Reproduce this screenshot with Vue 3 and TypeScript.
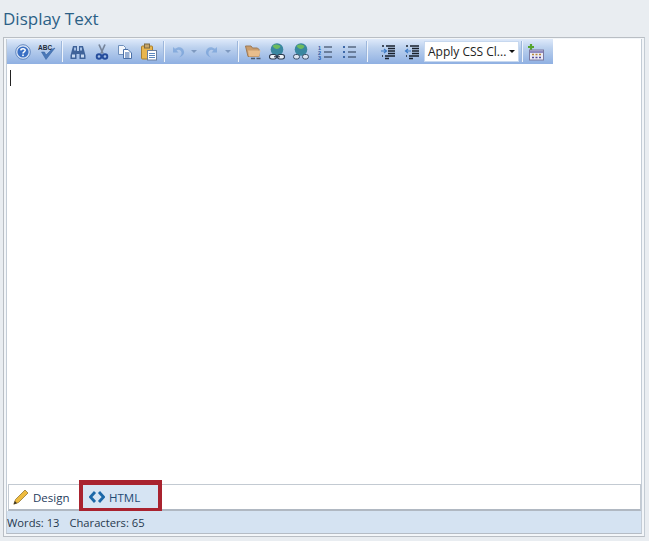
<script setup lang="ts">
const words = 13
const characters = 65
</script>

<template>
  <div class="page">
    <h1 class="title">Display Text</h1>
    <div class="editor">
      <div class="inner">
        <div class="toolbar">
          <span class="btn"><svg viewBox="0 0 16 16" class="ic"><circle cx="8" cy="8" r="7.300" fill="#dbe6f6" stroke="#4a74b4" stroke-width=".8"/><circle cx="8" cy="8" r="5.600" fill="#3a6fc4"/><path d="M5.800 6.400C5.900 4.400 10.200 4.200 10.200 6.300 10.200 7.800 8 7.800 8 9.400" fill="none" stroke="#fff" stroke-width="1.500"/><rect x="7.200" y="10.500" width="1.600" height="1.600" fill="#fff"/></svg></span>
          <span class="btn n"><svg viewBox="0 0 18 18" class="ic wide"><text x="0" y="7" class="abc">ABC</text><path d="M3.500 9 8 16.500 17 5 13.500 6.500 8 12 6.500 9Z" fill="#4a78b8" stroke="#2f5c9c" stroke-width=".5"/></svg></span>
          <i class="sep s1"></i>
          <span class="btn"><svg viewBox="0 0 16 16" class="ic"><path d="M3 2H7V7H9V2H13L15.500 11.500V15H9.500V10H6.500V15H.5V11.500Z" fill="#3f639a"/><path d="M2 10.500H5V13.500H2ZM11 10.500H14V13.500H11Z" fill="#c8daf2"/><path d="M4 3.500H6V6.500H4ZM10 3.500H12V6.500H10Z" fill="#a5c0e6"/></svg></span>
          <span class="btn n"><svg viewBox="0 0 16 16" class="ic"><path d="M5 .5 9 9.500M11 .5 7 9.500" stroke="#77859b" stroke-width="1.700" fill="none"/><circle cx="5" cy="12.500" r="2.300" fill="none" stroke="#244c9c" stroke-width="1.900"/><circle cx="11" cy="12.500" r="2.300" fill="none" stroke="#244c9c" stroke-width="1.900"/></svg></span>
          <span class="btn"><svg viewBox="0 0 16 16" class="ic"><path d="M1.500 1.500H6.500L8.500 3.500V10.500H1.500Z" fill="#f3f6fb" stroke="#6f8fbb"/><path d="M6.500 5.500H11L14.500 9V14.500H6.500Z" fill="#fff" stroke="#4a70a8"/><path d="M8 9H12.500M8 11H12.500M8 13H12.500" stroke="#2d5da6"/></svg></span>
          <span class="btn"><svg viewBox="0 0 18 18" class="ic wide"><rect x="1.500" y="3" width="11" height="13" rx="1" fill="#e9b64f" stroke="#a9802f"/><rect x="4.500" y="1" width="5" height="4" fill="#c7a569" stroke="#7b6a45"/><rect x="7.500" y="7.500" width="9" height="9.500" fill="#fff" stroke="#6a7f9e"/><path d="M9 10.500H15M9 12.500H15M9 14.500H15" stroke="#5b87bd"/></svg></span>
          <i class="sep s2"></i>
          <span class="btn s-undo"><svg viewBox="0 0 16 16" class="ic faded"><path d="M3 3V8.500H8.500L6.500 6.500C8.500 5 11 6 11.500 8.500 11.800 10.500 11 12 9 13.500 12.500 12.500 14.500 10 14 7.500 13.500 3.500 9 1.500 5 4.800Z" fill="#5c8fd0"/></svg></span>
          <span class="caret c1"></span>
          <span class="btn s-redo"><svg viewBox="0 0 16 16" class="ic faded flip"><path d="M3 3V8.500H8.500L6.500 6.500C8.500 5 11 6 11.500 8.500 11.800 10.500 11 12 9 13.500 12.500 12.500 14.500 10 14 7.500 13.500 3.500 9 1.500 5 4.800Z" fill="#5c8fd0"/></svg></span>
          <span class="caret c2"></span>
          <i class="sep s3"></i>
          <span class="btn"><svg viewBox="0 0 18 18" class="ic wide"><path d="M1.500 3H7L8.500 5H13.500L15 6.500V13.500H4Z" fill="#c99c6c" stroke="#9c7a58"/><path d="M4 7.500H16.500L15 13.500H5Z" fill="#e8bd8c"/><path d="M7 15.500H11M12.500 15.500H16.500" stroke="#4a5a70" stroke-width="1.400"/></svg></span>
          <span class="btn"><svg viewBox="0 0 18 18" class="ic wide"><circle cx="9" cy="6.500" r="6.300" fill="#3a87a0"/><path d="M4.500 3C7 .8 11 1.200 12.500 3.500 11 6.500 7 7 4.500 3Z" fill="#6dbb5e"/><rect x="1.500" y="11.500" width="7" height="4.500" rx="2.200" fill="#eef3f9" stroke="#2c3a4e" stroke-width="1.100"/><rect x="9.500" y="11.500" width="7" height="4.500" rx="2.200" fill="#eef3f9" stroke="#2c3a4e" stroke-width="1.100"/><path d="M6 13.750H12" stroke="#2c3a4e" stroke-width="1.100"/></svg></span>
          <span class="btn"><svg viewBox="0 0 18 18" class="ic wide"><circle cx="9" cy="6.500" r="6.300" fill="#3a87a0"/><path d="M4.500 3C7 .8 11 1.200 12.500 3.500 11 6.500 7 7 4.500 3Z" fill="#6dbb5e"/><rect x="1.500" y="11.500" width="6" height="4.500" rx="2.200" fill="#dbe5f2" stroke="#3a4d66" stroke-width="1"/><rect x="10.500" y="11.500" width="6" height="4.500" rx="2.200" fill="#dbe5f2" stroke="#3a4d66" stroke-width="1"/></svg></span>
          <span class="btn"><svg viewBox="0 0 16 16" class="ic"><path d="M7 3H15M7 8H15M7 13H15" stroke="#24344c" stroke-width="1.200"/><text x="1" y="5.500" class="num">1</text><text x="1" y="10.500" class="num">2</text><text x="1" y="15.500" class="num">3</text></svg></span>
          <span class="btn"><svg viewBox="0 0 16 16" class="ic"><path d="M7 3H15M7 8H15M7 13H15" stroke="#24344c" stroke-width="1.200"/><path d="M2 2H4V4H2ZM2 7H4V9H2ZM2 12H4V14H2Z" fill="#3d68a8"/></svg></span>
          <i class="sep s4"></i>
          <span class="btn s-ind"><svg viewBox="0 0 16 16" class="ic"><path d="M6 2H15M8 4.500H15M8 7H15M8 9.500H15M5 12H15M2 2H4M2 12H3M5 14.500H9" stroke="#18202c" stroke-width="1.300"/><path d="M1 7H6M4 5 6.500 7 4 9" fill="none" stroke="#3f7cc6" stroke-width="1.200"/></svg></span>
          <span class="btn n"><svg viewBox="0 0 16 16" class="ic"><path d="M6 2H15M8 4.500H15M8 7H15M8 9.500H15M5 12H15M2 2H4M2 12H3M5 14.500H9" stroke="#18202c" stroke-width="1.300"/><path d="M7 7H2M4 5 1.500 7 4 9" fill="none" stroke="#3f7cc6" stroke-width="1.200"/></svg></span>
          <span class="select"><span class="select-text">Apply CSS Cl...</span><span class="select-caret"></span></span>
          <i class="sep s5"></i>
          <span class="btn s-tbl"><svg viewBox="0 0 18 18" class="ic wide"><path d="M4 1V7M1 4H7" stroke="#55a52d" stroke-width="2.200"/><rect x="2.500" y="7" width="14" height="10" fill="#ecebf5" stroke="#7c7aa0"/><rect x="3" y="7.500" width="13" height="2.500" fill="#8f8bc0"/><path d="M5 11.500H7M8.500 11.500H10.500M12 11.500H14" stroke="#b8863b" stroke-width="1.500"/><path d="M5 14.500H7M8.500 14.500H10.500M12 14.500H14" stroke="#50489a" stroke-width="1.500"/></svg></span>
        </div>
        <div class="content"><span class="cursor"></span></div>
        <div class="tabs">
          <span class="tab design">
            <svg viewBox="0 0 16 16" class="tab-ic"><path d="M.8 15.200 2.500 10.500 12 1 15 4 5.500 13.500Z" fill="#eebb3f" stroke="#8a6a22" stroke-width=".7"/><path d="M.8 15.200 1.800 12 4 14.200Z" fill="#33302a"/></svg>
            <span>Design</span>
          </span>
          <span class="tab html">
            <svg viewBox="0 0 16 12" class="code-ic"><path d="M6 1 1.500 6 6 11M10 1 14.500 6 10 11" fill="none" stroke="#1c68a8" stroke-width="2.800"/></svg>
            <span>HTML</span>
          </span>
        </div>
        <div class="status">
          <span>Words: {{ words }}</span>
          <span>Characters: {{ characters }}</span>
        </div>
      </div>
    </div>
  </div>
</template>

<style>
html, body { margin: 0; background: #e9edf1; }
</style>

<style scoped>
.page {
  box-sizing: border-box;
  width: 649px;
  height: 541px;
  padding: 8px 4px 0 3px;
  background: #e9edf1;
  font-family: "Open Sans", "Liberation Sans", sans-serif;
  overflow: hidden;
}
.title {
  margin: 0 0 7px;
  height: 22px;
  font-size: 17px;
  line-height: 22px;
  font-weight: 400;
  color: #2b6086;
}
.editor {
  box-sizing: border-box;
  height: 500px;
  border: 1px solid #b9bec4;
  border-right-color: #c3cbd3;
  padding: 1px 2px 2px 2px;
  background: #f3f6f9;
}
.inner {
  display: flex;
  flex-direction: column;
  height: 100%;
  border-left: 1px solid #c3ccd6;
  border-right: 1px solid #c3ccd6;
  border-bottom: 1px solid #b5bcc5;
  box-sizing: border-box;
  background: #fff;
}
.toolbar {
  display: flex;
  align-items: center;
  box-sizing: border-box;
  width: 546px;
  height: 25px;
  padding-left: 4px;
  background: linear-gradient(#dfeafa 0%, #bcd1ee 35%, #8fb0e2 100%);
}
.btn {
  flex: none;
  display: flex;
  justify-content: center;
  width: 24px;
}
.btn.n { width: 23px; }
.ic { width: 16px; height: 16px; flex: none; display: block; }
.ic.wide { width: 18px; height: 18px; }
.faded { opacity: .5; }
.flip { transform: scaleX(-1); }
.abc { font: 700 6.500px "Liberation Sans", sans-serif; fill: #222a38; }
.num { font: 700 5.500px "Liberation Sans", sans-serif; fill: #2d5da6; }
.sep {
  flex: none;
  width: 1px;
  height: 21px;
  background: #eef4fc;
  box-shadow: -1px 0 0 #9db7dc;
}
.s1 { margin: 0 3px 0 4px; }
.s2 { margin: 0 0 0 3px; }
.s-undo { margin-left: 1px; }
.caret {
  flex: none;
  width: 0;
  height: 0;
  border-left: 3px solid transparent;
  border-right: 3px solid transparent;
  border-top: 3px solid #7e99c0;
}
.c1 { margin-left: 1px; }
.s-redo { margin-left: 3px; }
.c2 { margin-left: 1px; }
.s3 { margin: 0 2px 0 7px; }
.s4 { margin-left: 6px; }
.s-ind { margin-left: 8px; }
.select {
  flex: none;
  display: flex;
  align-items: center;
  box-sizing: border-box;
  width: 95px;
  height: 21px;
  margin-left: 1px;
  padding-left: 3px;
  background: #fff;
  border: 1px solid #c7d8ef;
  font-size: 12px;
  color: #222;
  white-space: nowrap;
}
.select-text { flex: 1; }
.select-caret {
  margin-right: 3px;
  border-left: 3px solid transparent;
  border-right: 3px solid transparent;
  border-top: 3px solid #111;
}
.s5 { margin-left: 3px; }
.s-tbl { margin-left: 1px; }
.content { flex: 1; padding: 6px 0 0 3px; }
.cursor { display: block; width: 1px; height: 16px; background: #222; }
.tabs {
  display: flex;
  align-items: stretch;
  box-sizing: border-box;
  height: 27px;
  background: #fff;
  border: 1px solid #c3cad2;
  border-bottom: 2px solid #b0b8c2;
  margin-left: 1px;
  font-size: 11.500px;
}
.tab {
  display: flex;
  align-items: center;
  box-sizing: border-box;
  color: #1f3b5c;
}
.design { flex: none; width: 70px; padding-left: 4px; gap: 4px; }
.tab-ic { width: 16px; height: 16px; }
.html {
  flex: none;
  width: 83px;
  height: 32px;
  margin-top: -5px;
  padding: 1px 0 0 6px;
  gap: 4px;
  background: #d6e4f3;
  border: 4px solid #a9232f;
  border-top-width: 5px;
  color: #1f4a75;
}
.code-ic { width: 16px; height: 12px; }
.status {
  display: flex;
  align-items: center;
  gap: 10px;
  box-sizing: border-box;
  height: 22px;
  padding-left: 0;
  background: #d5e3f2;
  font-size: 11.200px;
  color: #26384e;
}
</style>
